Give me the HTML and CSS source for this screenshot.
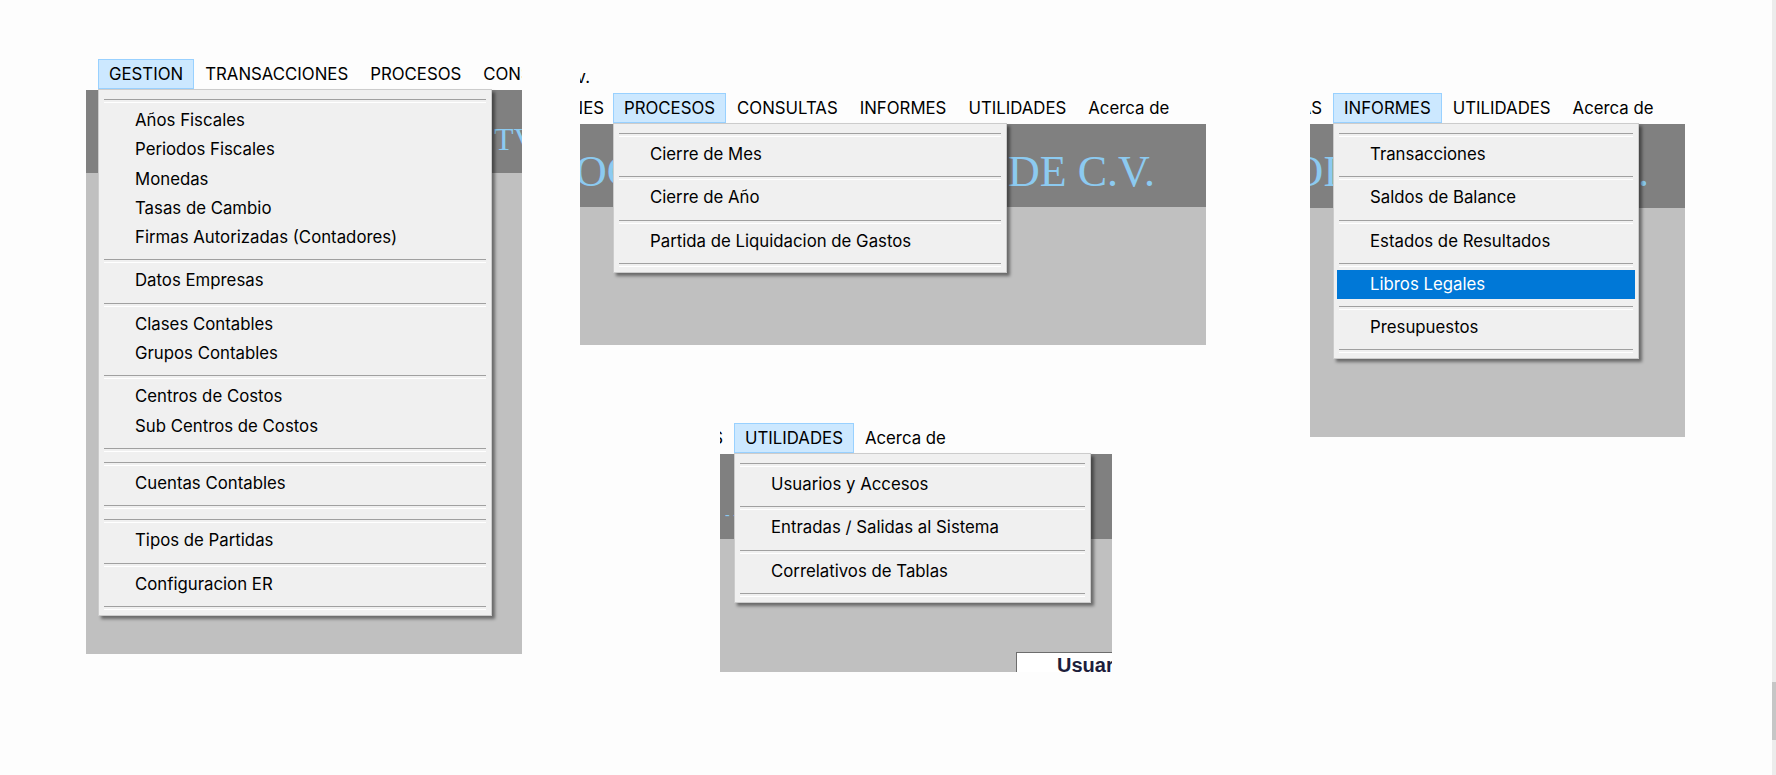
FILE: index.html
```html
<!DOCTYPE html>
<html lang="es">
<head>
<meta charset="utf-8">
<title>Menús del sistema contable</title>
<link rel="stylesheet" href="styles.css">
</head>
<body>
<div class="canvas">

  <section class="clip clip-1">
    <nav class="menubar menubar-1">
      <div class="mb-item active">GESTION
        <div class="dropdown dd-1">
          <div class="sep"></div>
          <div class="dd-item">Años Fiscales</div>
          <div class="dd-item">Periodos Fiscales</div>
          <div class="dd-item">Monedas</div>
          <div class="dd-item">Tasas de Cambio</div>
          <div class="dd-item">Firmas Autorizadas (Contadores)</div>
          <div class="sep"></div>
          <div class="dd-item">Datos Empresas</div>
          <div class="sep"></div>
          <div class="dd-item">Clases Contables</div>
          <div class="dd-item">Grupos Contables</div>
          <div class="sep"></div>
          <div class="dd-item">Centros de Costos</div>
          <div class="dd-item">Sub Centros de Costos</div>
          <div class="sep"></div>
          <div class="sep"></div>
          <div class="dd-item">Cuentas Contables</div>
          <div class="sep"></div>
          <div class="sep"></div>
          <div class="dd-item">Tipos de Partidas</div>
          <div class="sep"></div>
          <div class="dd-item">Configuracion ER</div>
          <div class="sep"></div>
        </div>
      </div>
      <div class="mb-item">TRANSACCIONES</div>
      <div class="mb-item">PROCESOS</div>
      <div class="mb-item">CONSULTAS</div>
    </nav>
    <div class="window">
      <div class="band band-1"><span class="band-text">TV</span></div>
      <div class="lower"></div>
    </div>
  </section>

  <section class="clip clip-2">
    <div class="title-row"><div class="title-lead"><span class="title-text">S.A. DE C.V.</span></div></div>
    <nav class="menubar">
      <div class="mb-lead lead-2">
        <div class="mb-item">GESTION</div>
        <div class="mb-item">TRANSACCIONES</div>
      </div>
      <div class="mb-item active">PROCESOS
        <div class="dropdown dd-2">
          <div class="sep"></div>
          <div class="dd-item">Cierre de Mes</div>
          <div class="sep"></div>
          <div class="dd-item">Cierre de Año</div>
          <div class="sep"></div>
          <div class="dd-item">Partida de Liquidacion de Gastos</div>
          <div class="sep"></div>
        </div>
      </div>
      <div class="mb-item">CONSULTAS</div>
      <div class="mb-item">INFORMES</div>
      <div class="mb-item">UTILIDADES</div>
      <div class="mb-item">Acerca de</div>
    </nav>
    <div class="window">
      <div class="band band-2">
        <div class="band-lead lead-b2"><span class="band-text">OC</span></div>
        <span class="band-text">DE C.V.</span>
      </div>
      <div class="lower"></div>
    </div>
  </section>

  <section class="clip clip-3">
    <nav class="menubar">
      <div class="mb-lead lead-3">
        <div class="mb-item">PROCESOS</div>
        <div class="mb-item">CONSULTAS</div>
      </div>
      <div class="mb-item active">INFORMES
        <div class="dropdown dd-3">
          <div class="sep"></div>
          <div class="dd-item">Transacciones</div>
          <div class="sep"></div>
          <div class="dd-item">Saldos de Balance</div>
          <div class="sep"></div>
          <div class="dd-item">Estados de Resultados</div>
          <div class="sep"></div>
          <div class="dd-item hl">Libros Legales</div>
          <div class="sep"></div>
          <div class="dd-item">Presupuestos</div>
          <div class="sep"></div>
        </div>
      </div>
      <div class="mb-item">UTILIDADES</div>
      <div class="mb-item">Acerca de</div>
    </nav>
    <div class="window">
      <div class="band band-3">
        <div class="band-lead lead-b3"><span class="band-text">OI</span></div>
        <span class="band-text">.</span>
      </div>
      <div class="lower"></div>
    </div>
  </section>

  <section class="clip clip-4">
    <nav class="menubar">
      <div class="mb-lead lead-4">
        <div class="mb-item">INFORMES</div>
      </div>
      <div class="mb-item active">UTILIDADES
        <div class="dropdown dd-4">
          <div class="sep"></div>
          <div class="dd-item">Usuarios y Accesos</div>
          <div class="sep"></div>
          <div class="dd-item">Entradas / Salidas al Sistema</div>
          <div class="sep"></div>
          <div class="dd-item">Correlativos de Tablas</div>
          <div class="sep"></div>
        </div>
      </div>
      <div class="mb-item">Acerca de</div>
    </nav>
    <div class="window">
      <div class="band band-4"><span class="band-dash">- -</span></div>
      <div class="lower lower-4">
        <div class="form-box">Usuarios</div>
      </div>
    </div>
  </section>

  <div class="scrollbar"><div class="scroll-thumb"></div></div>
</div>
</body>
</html>
```

FILE: styles.css
```css
* { box-sizing: border-box; }
html, body { margin: 0; padding: 0; }
body {
  background: #fdfdfd;
  font-family: "Inter", "Open Sans", sans-serif;
  color: #000;
}
.canvas { position: relative; width: 1776px; height: 775px; overflow: hidden; }

.clip { position: absolute; overflow: hidden; display: flex; flex-direction: column; }
.clip-1 { left: 86px; top: 55px; width: 436px; height: 599px; padding-top: 4px; }
.clip-2 { left: 580px; top: 73px; width: 626px; height: 272px; }
.clip-3 { left: 1310px; top: 88px; width: 375px; height: 349px; padding-top: 5px; }
.clip-4 { left: 720px; top: 418px; width: 392px; height: 254px; padding-top: 5px; }

.title-row { flex: none; height: 20px; display: flex; font-size: 16.8px; white-space: nowrap; }
.title-lead { flex: none; width: 10px; display: flex; justify-content: flex-end; }
.title-text { flex: none; line-height: 8px; }

.menubar {
  flex: none; height: 31px; display: flex; align-items: flex-start;
  position: relative; z-index: 2; font-size: 16.8px; white-space: nowrap;
}
.menubar-1 { padding-left: 12px; }
.mb-lead { flex: none; display: flex; justify-content: flex-end; }
.lead-2 { width: 33px; }
.lead-2 .mb-item:last-child { padding-right: 8px; }
.lead-3 { width: 23px; }
.lead-4 { width: 14px; }
.mb-item {
  flex: none; position: relative; height: 30px; line-height: 28px;
  padding: 0 10px; border: 1px solid transparent;
}
.mb-item.active { background: #cce8ff; border-color: #99d1ff; }

.dropdown {
  position: absolute; top: 29px; left: -1px;
  background: #f0f0f0; border: 1px solid #cccccc; padding: 2px;
  box-shadow: 3px 3px 3px rgba(0, 0, 0, 0.45);
}
.dd-1 { width: 394px; }
.dd-2 { width: 394px; }
.dd-3 { width: 306px; }
.dd-4 { width: 357px; }
.sep { height: 14px; padding-top: 7px; margin: 0 3px; }
.sep::before { content: ""; display: block; height: 2px; border-top: 1px solid #a0a0a0; border-bottom: 1px solid #ffffff; }
.dd-item { height: 29.3px; line-height: 29.3px; padding-left: 33px; margin: 0 1px; }
.dd-item.hl { background: #0078d7; color: #fff; }

.window { flex: 1; display: flex; flex-direction: column; min-height: 0; }
.band { flex: none; height: 83px; background: #808080; display: flex; align-items: flex-start; white-space: nowrap; }
.band-3 { height: 84px; }
.band-4 { height: 85px; padding: 54px 0 0 5px; }
.lower { flex: 1; background: #c0c0c0; }
.band-text { flex: none; font-family: "Liberation Serif", serif; color: #8ccaf0; }
.band-1 { padding: 33px 0 0 408px; }
.band-1 .band-text { font-size: 32px; line-height: 32px; }
.band-2, .band-3 { padding-top: 26px; }
.band-2 .band-text, .band-3 .band-text { font-size: 44px; line-height: 44px; }
.band-lead { flex: none; display: flex; justify-content: flex-end; }
.lead-b2 { width: 56px; margin-right: 372px; }
.lead-b3 { width: 28px; margin-right: 300px; }
.band-dash { font-family: "Liberation Serif", serif; font-size: 14px; line-height: 14px; color: #8ccaf0; }

.lower-4 { padding: 113px 0 0 296px; }
.form-box {
  width: 200px; height: 40px; background: #fff; border: 1px solid #6d6d6d;
  padding: 2px 0 0 40px; font-family: "Liberation Sans", Arial, sans-serif;
  font-weight: bold; font-size: 20px; line-height: 20px; color: #1e1e3c;
}

.scrollbar { position: absolute; right: 0; top: 0; width: 4px; height: 775px; background: #ececec; }
.scroll-thumb { margin-top: 682px; height: 58px; background: #c6c6c6; }
```
